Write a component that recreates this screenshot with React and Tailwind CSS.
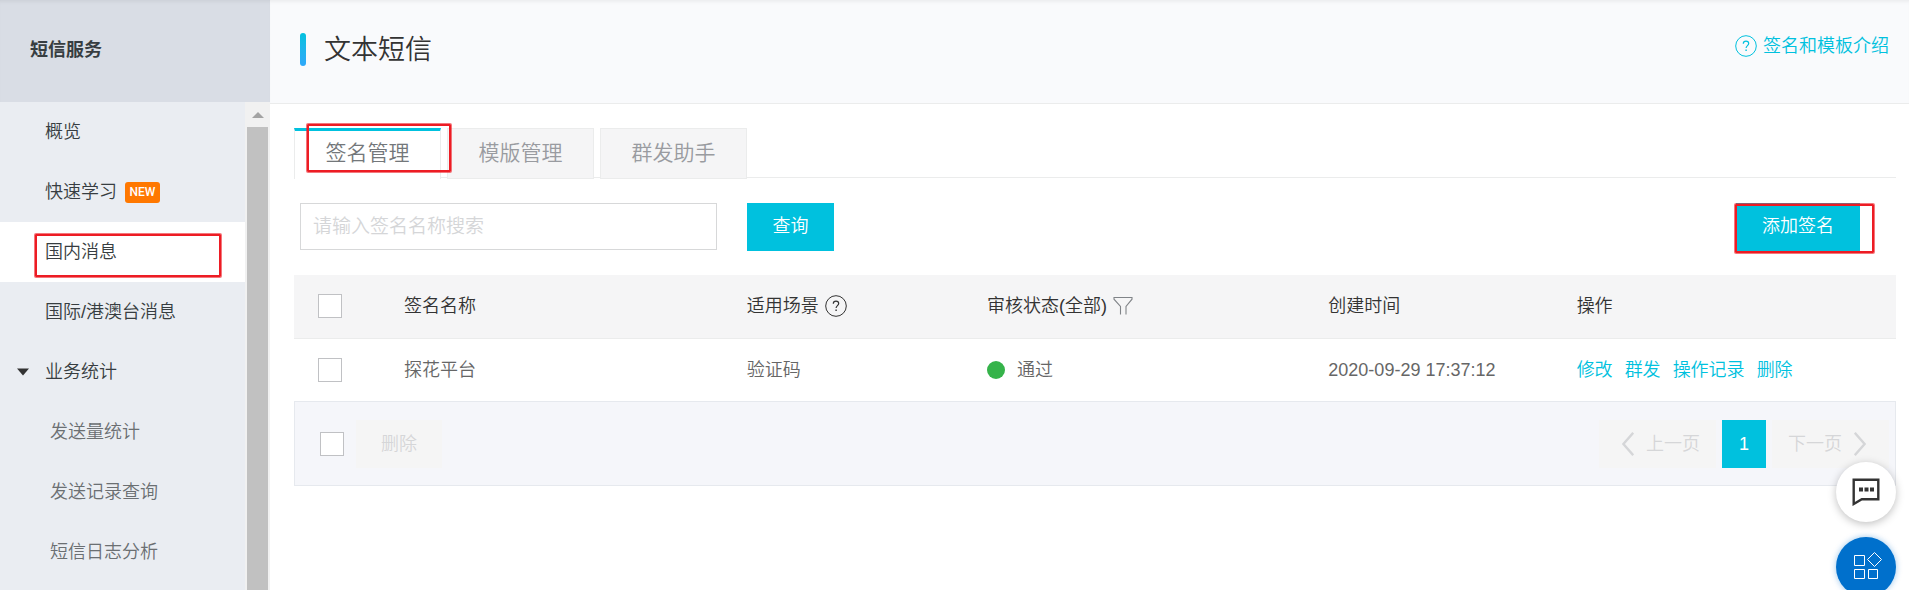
import React from 'react';

const menu = [
  { label: '概览' },
  { label: '快速学习', badge: 'NEW' },
  { label: '国内消息', active: true },
  { label: '国际/港澳台消息' },
  { label: '业务统计', open: true },
  { label: '发送量统计', sub: true },
  { label: '发送记录查询', sub: true },
  { label: '短信日志分析', sub: true },
];

const tabs = ['签名管理', '模版管理', '群发助手'];
const actions = ['修改', '群发', '操作记录', '删除'];

function Marker({ className }) {
  return (
    <span
      aria-hidden="true"
      className={`pointer-events-none absolute z-10 rounded-[1px] border-2 border-[#ed1c24] ring-1 ring-[#ed1c24]/60 ${className}`}
    />
  );
}

function Check({ label }) {
  return (
    <input
      type="checkbox"
      aria-label={label}
      className="block size-6 shrink-0 appearance-none border border-[#c0c1c4] bg-white checked:bg-[#00c1de]"
    />
  );
}

function HelpIcon() {
  return (
    <svg viewBox="0 0 22 22" className="size-[22px] shrink-0" fill="none" stroke="currentColor" aria-hidden="true">
      <circle cx="11" cy="11" r="10.3" strokeWidth="1" />
      <path d="M8.3 8.7c0-1.6 1.1-2.6 2.7-2.6s2.7 1 2.7 2.4c0 2-2.6 2.2-2.6 4.5" strokeWidth="1.2" />
      <path d="M11.1 14.6v1.5" strokeWidth="1.4" />
    </svg>
  );
}

function Sidebar() {
  return (
    <aside className="flex w-[270px] shrink-0 flex-col bg-[#eaedf2]">
      <div className="flex h-[102px] shrink-0 items-center bg-[#d9dde5] pb-[2px] pl-[30px] shadow-[inset_0_4px_4px_-3px_rgba(0,0,0,0.08)]">
        <h2 className="text-lg font-bold text-[#373d41]">短信服务</h2>
      </div>
      <div className="flex min-h-0 flex-1">
        <nav className="min-w-0 flex-1 overflow-hidden">
          <ul>
            {menu.map((m) => (
              <li key={m.label} className={`relative h-[60px] ${m.active ? 'bg-white' : ''}`}>
                <a
                  href="#"
                  className={`flex h-full items-center ${m.sub ? 'pl-[50px] text-[#6b6f72]' : 'pl-[45px] text-[#373d41]'}`}
                >
                  {m.label}
                  {m.badge && (
                    <span className="ml-2 flex h-[21px] w-[35px] items-center justify-center rounded-[3px] bg-[#ff7800] font-[Roboto] text-xs font-medium text-white">
                      {m.badge}
                    </span>
                  )}
                </a>
                {m.open && (
                  <svg viewBox="0 0 12 8" className="absolute left-[17px] top-[26px] h-2 w-3" aria-hidden="true">
                    <path d="M0 0.5h12L6 7.5z" fill="#333" />
                  </svg>
                )}
                {m.active && <Marker className="bottom-[5px] left-[35px] right-6 top-3" />}
              </li>
            ))}
          </ul>
        </nav>
        <div className="flex w-[25px] flex-col items-center bg-[#f1f1f1]" aria-hidden="true">
          <div className="flex h-[25px] items-center">
            <svg viewBox="0 0 12 6" className="h-[6px] w-3">
              <path d="M0 6L6 0l6 6z" fill="#a3a3a3" />
            </svg>
          </div>
          <div className="w-[21px] flex-1 bg-[#c1c1c1]" />
        </div>
      </div>
    </aside>
  );
}

function SignatureTable() {
  return (
    <table className="w-full table-fixed border-collapse text-left">
      <colgroup>
        <col className="w-[86px]" />
        <col className="w-[21.4%]" />
        <col className="w-[15%]" />
        <col className="w-[21.3%]" />
        <col className="w-[15.5%]" />
        <col />
      </colgroup>
      <thead>
        <tr className="h-[63px] border-b border-[#ebecec] bg-[#f5f5f6] text-[#333]">
          <th className="px-6 font-[350]"><Check label="全选" /></th>
          <th className="px-6 font-[350]">签名名称</th>
          <th className="px-6 font-[350]">
            <span className="flex items-center gap-[6px]">适用场景<HelpIcon /></span>
          </th>
          <th className="px-6 font-[350]">
            <span className="flex items-center gap-[6px]">
              审核状态(全部)
              <svg viewBox="0 0 20 20" className="size-5" fill="none" stroke="#808488" strokeWidth="1.1" aria-hidden="true">
                <path d="M7.5 18.5v-8L1 3.2V1.5h18v1.7l-6 7.3v8" />
              </svg>
            </span>
          </th>
          <th className="px-6 font-[350]">创建时间</th>
          <th className="px-6 font-[350]">操作</th>
        </tr>
      </thead>
      <tbody>
        <tr className="h-[63px] text-[#666]">
          <td className="px-6"><Check label="选择 探花平台" /></td>
          <td className="px-6">探花平台</td>
          <td className="px-6">验证码</td>
          <td className="px-6">
            <span className="flex items-center gap-3">
              <span className="size-[18px] rounded-full bg-[#35b34a]" />
              通过
            </span>
          </td>
          <td className="px-6">2020-09-29 17:37:12</td>
          <td className="px-6">
            <span className="flex gap-3 whitespace-nowrap text-[#00c1de]">
              {actions.map((a) => <a key={a} href="#">{a}</a>)}
            </span>
          </td>
        </tr>
      </tbody>
    </table>
  );
}

function TableFooter() {
  return (
    <div className="flex h-[85px] items-center border border-[#e6e9ee] bg-[#f5f6fa] pl-[25px] pr-[6px]">
      <Check label="全选本页" />
      <button type="button" disabled className="ml-3 h-12 w-[86px] bg-[#f5f5f5] text-[#d5d6d8]">删除</button>
      <nav className="ml-auto flex gap-[6px] text-[#d5d6d8]" aria-label="分页">
        <button type="button" disabled className="flex h-12 w-[117px] items-center gap-3 bg-[#f5f5f5] pl-[23px]">
          <svg viewBox="0 0 12 24" className="h-6 w-3" fill="none" stroke="currentColor" strokeWidth="2.4" aria-hidden="true">
            <path d="M11.2 0.8L1.4 12l9.8 11.2" />
          </svg>
          上一页
        </button>
        <button type="button" className="h-12 w-11 bg-[#00c1de] text-white">1</button>
        <button type="button" disabled className="flex h-12 w-[117px] items-center gap-3 bg-[#f5f5f5] pl-4">
          下一页
          <svg viewBox="0 0 12 24" className="h-6 w-3" fill="none" stroke="currentColor" strokeWidth="2.4" aria-hidden="true">
            <path d="M0.8 0.8L10.6 12L0.8 23.2" />
          </svg>
        </button>
      </nav>
    </div>
  );
}

export default function App() {
  return (
    <div className="flex h-screen overflow-hidden bg-white font-['Liberation_Sans','Noto_Sans_CJK_SC',sans-serif] text-lg font-[350] leading-6">
      <Sidebar />
      <main className="min-w-0 flex-1">
        <header className="flex h-[104px] items-center border-b border-[#ebecec] bg-[#f9fafc] pb-1 pl-[30px] pr-5 shadow-[inset_0_4px_4px_-3px_rgba(0,0,0,0.08)]">
          <span className="h-[33px] w-[6px] rounded-[3px] bg-linear-to-b from-[#00c1de] to-[#2fa8fa]" />
          <h1 className="ml-[18px] text-[27px] leading-9 text-[#333]">文本短信</h1>
          <a href="#" className="mb-2 ml-auto flex items-center gap-[6px] text-[#00c1de]">
            <HelpIcon />
            签名和模板介绍
          </a>
        </header>

        <div className="pl-6 pr-[13px] pt-6">
          <div className="relative flex h-[50px] gap-[6px] border-b border-[#ebecec]" role="tablist">
            {tabs.map((t, i) => (
              <button
                key={t}
                type="button"
                role="tab"
                aria-selected={i === 0}
                className={
                  i === 0
                    ? 'h-[51px] w-[147px] border-x border-t-3 border-x-[#ebecec] border-t-[#00c1de] bg-white pb-1 text-[21px] text-[#73777a]'
                    : 'h-[51px] w-[147px] border border-[#ebecec] bg-[#f5f5f6] pb-[2px] text-[21px] text-[#999ba0]'
                }
              >
                {t}
              </button>
            ))}
            <Marker className="-top-1 left-[13px] h-12 w-[144px]" />
          </div>

          <div className="flex h-[97px] items-center pl-[6px] pr-9">
            <input
              type="text"
              aria-label="签名名称"
              placeholder="请输入签名名称搜索"
              className="h-[47px] w-[417px] border border-[#d7d8d9] px-3 text-[19px] text-[#373d41] placeholder:text-[#d5d6d8]"
            />
            <button type="button" className="ml-[30px] h-12 w-[87px] bg-[#00c1de] pb-[2px] text-white">查询</button>
            <div className="relative ml-auto">
              <button type="button" className="h-12 w-[124px] bg-[#00c1de] pb-[2px] text-white">添加签名</button>
              <Marker className="-bottom-[2px] -left-[1px] -right-[14px] top-[1px]" />
            </div>
          </div>

          <SignatureTable />
          <TableFooter />
        </div>
      </main>

      <div className="fixed -bottom-[7px] right-[13px] z-20 flex flex-col gap-[15px]">
        <button type="button" aria-label="在线咨询" className="flex size-[60px] items-center justify-center rounded-full bg-white shadow-[0_2px_8px_rgba(0,0,0,0.25)]">
          <svg viewBox="0 0 28 28" className="size-7" fill="none" stroke="#333" strokeWidth="2.4" aria-hidden="true">
            <path d="M1.7 1.7h24.6v19.6H9.8L1.7 26z" />
            <path d="M7 11.5h4M12.5 11.5h4M18 11.5h4" strokeWidth="4" />
          </svg>
        </button>
        <button type="button" aria-label="应用" className="flex size-[60px] items-center justify-center rounded-full bg-[#0070cc] shadow-[0_0_6px_rgba(0,112,204,0.4)]">
          <svg viewBox="0 0 28 28" className="size-7 overflow-visible" fill="none" stroke="#fff" aria-hidden="true">
            <path d="M2.5 2.5h10v10h-10zM2.5 16.5h10v9h-10zM16.5 16.5h9v9h-9zM22.5 -0.5l7 7-7 7-7-7z" />
          </svg>
        </button>
      </div>
    </div>
  );
}
